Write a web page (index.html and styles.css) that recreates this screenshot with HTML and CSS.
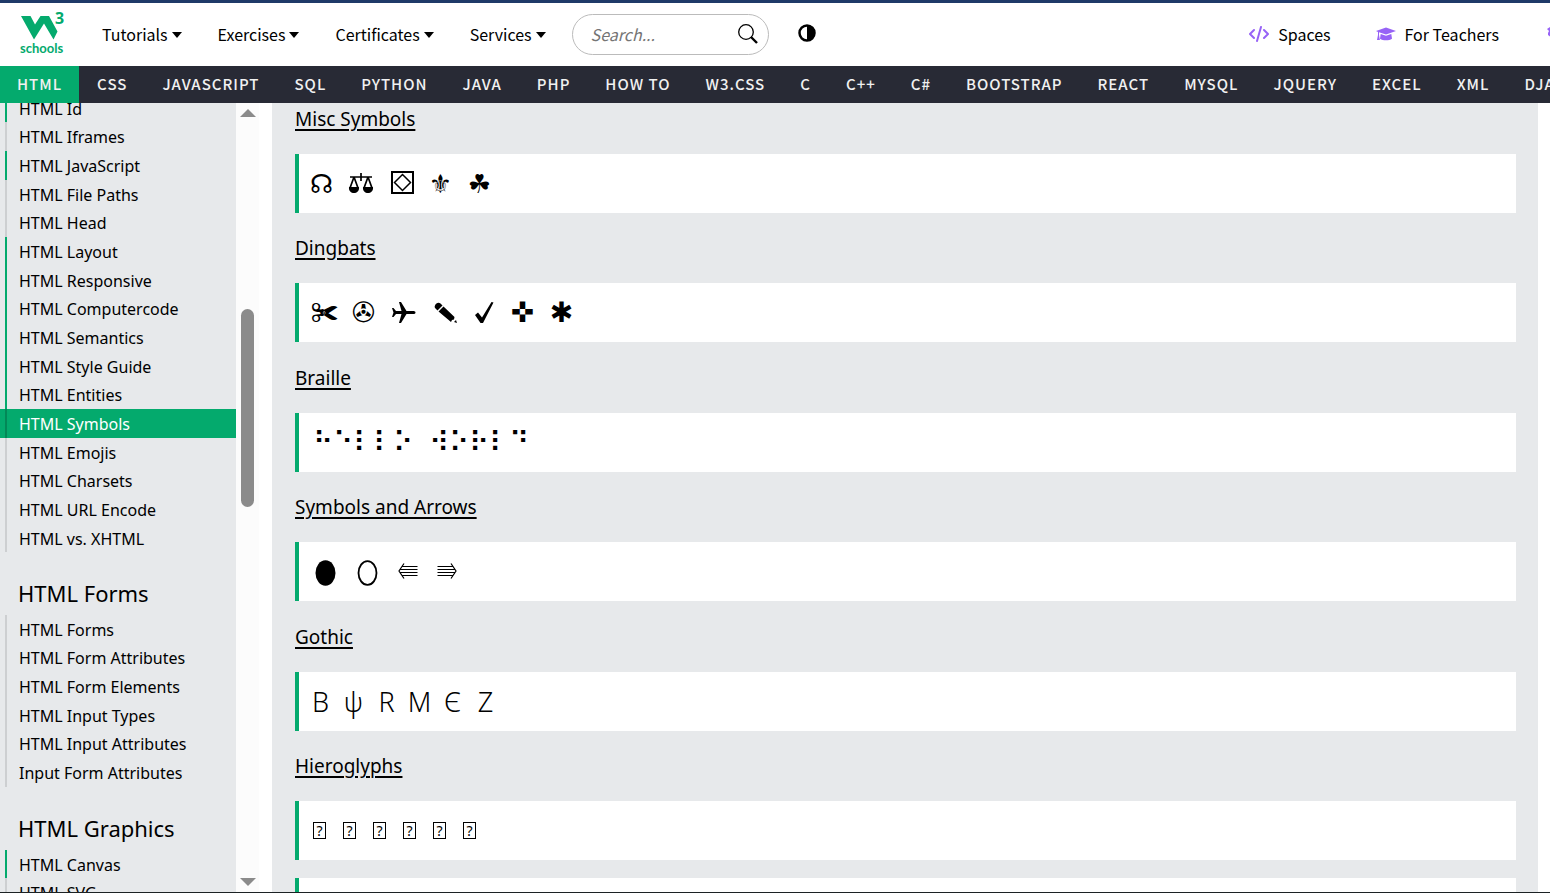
FILE: index.html
```html
<!DOCTYPE html>
<html lang="en">
<head>
<meta charset="utf-8">
<title>HTML Symbols</title>
<link rel="stylesheet" href="styles.css">
</head>
<body>
<header class="top">
  <a class="logo" href="#" aria-label="W3Schools home">
    <svg width="48" height="48" viewBox="0 0 48 48" fill="#04aa6d">
      <path d="M1 5H10.500L15 13.500 20.500 5H29L37.500 20.500 33.500 28.500 24 12.500 14 28.500Z"/>
      <text class="logo-3" x="35" y="13">3</text>
      <text class="logo-word" x="0" y="42">schools</text>
    </svg>
  </a>
  <nav class="menus" aria-label="Sections">
    <button class="menu">Tutorials<span class="caret"></span></button>
    <button class="menu">Exercises<span class="caret"></span></button>
    <button class="menu">Certificates<span class="caret"></span></button>
    <button class="menu">Services<span class="caret"></span></button>
  </nav>
  <form class="search">
    <input type="text" placeholder="Search..." aria-label="Search">
    <button type="button" class="search-btn" aria-label="Run search">
      <svg width="20" height="20" viewBox="0 0 20 20" fill="none" stroke="#000"><circle cx="8" cy="8" r="7.300" stroke-width="1.300"/><path d="M13 13l6 6" stroke-width="2.400"/></svg>
    </button>
  </form>
  <button class="theme" aria-label="Toggle theme">
    <svg width="18" height="18" viewBox="0 0 18 18"><circle cx="9" cy="9" r="7.500" fill="#fff" stroke="#000" stroke-width="2.500"/><path d="M9 1a8 8 0 0 1 0 16z"/></svg>
  </button>
  <div class="side-links">
    <a class="side-link" href="#">
      <svg width="20" height="16" viewBox="0 0 20 16" fill="none" stroke="#9763f6" stroke-width="2" stroke-linecap="round" stroke-linejoin="round"><path d="M5 4L1 8l4 4M15 4l4 4-4 4M12 1L8 15"/></svg>
      Spaces</a>
    <a class="side-link" href="#">
      <svg width="20" height="16" viewBox="0 0 20 16" fill="#9763f6"><path d="M10 1.500L20 5 10 8.500 3 6.300V9l.9 5H1l1-5V5.900L0 5zM4.700 8L10 9.800 15.300 8l.7 4.700c-3 2-9 2-12 0z"/></svg>
      For Teachers</a>
    <a class="side-link cut" href="#" aria-label="Get certified"><svg width="18" height="20" viewBox="0 0 18 20" fill="#9763f6"><path d="M0 5l3-2 2-3 4 1 4-1 2 3 3 2-2 5-4 4H5L1 11v-2l1-2z"/></svg></a>
  </div>
</header>
<nav class="topics" aria-label="Topics">
  <a class="topic on" href="#">HTML</a><a class="topic" href="#">CSS</a><a class="topic" href="#">JAVASCRIPT</a><a class="topic" href="#">SQL</a><a class="topic" href="#">PYTHON</a><a class="topic" href="#">JAVA</a><a class="topic" href="#">PHP</a><a class="topic" href="#">HOW TO</a><a class="topic" href="#">W3.CSS</a><a class="topic" href="#">C</a><a class="topic" href="#">C++</a><a class="topic" href="#">C#</a><a class="topic" href="#">BOOTSTRAP</a><a class="topic" href="#">REACT</a><a class="topic" href="#">MYSQL</a><a class="topic" href="#">JQUERY</a><a class="topic" href="#">EXCEL</a><a class="topic" href="#">XML</a><a class="topic" href="#">DJANGO</a>
</nav>
<div class="body">
  <nav class="sidebar" aria-label="HTML chapters">
    <ul class="chapters first">
      <li><a class="done" href="#">HTML Id</a></li>
      <li><a href="#">HTML Iframes</a></li>
      <li><a class="done" href="#">HTML JavaScript</a></li>
      <li><a href="#">HTML File Paths</a></li>
      <li><a href="#">HTML Head</a></li>
      <li><a class="done" href="#">HTML Layout</a></li>
      <li><a class="done" href="#">HTML Responsive</a></li>
      <li><a class="done" href="#">HTML Computercode</a></li>
      <li><a class="done" href="#">HTML Semantics</a></li>
      <li><a class="done" href="#">HTML Style Guide</a></li>
      <li><a class="done" href="#">HTML Entities</a></li>
      <li><a class="current" href="#">HTML Symbols</a></li>
      <li><a href="#">HTML Emojis</a></li>
      <li><a href="#">HTML Charsets</a></li>
      <li><a href="#">HTML URL Encode</a></li>
      <li><a href="#">HTML vs. XHTML</a></li>
    </ul>
    <h2>HTML Forms</h2>
    <ul class="chapters">
      <li><a href="#">HTML Forms</a></li>
      <li><a href="#">HTML Form Attributes</a></li>
      <li><a href="#">HTML Form Elements</a></li>
      <li><a href="#">HTML Input Types</a></li>
      <li><a href="#">HTML Input Attributes</a></li>
      <li><a href="#">Input Form Attributes</a></li>
    </ul>
    <h2>HTML Graphics</h2>
    <ul class="chapters">
      <li><a class="done" href="#">HTML Canvas</a></li>
      <li><a href="#">HTML SVG</a></li>
    </ul>
  </nav>
  <div class="scroll">
    <span class="up"></span>
    <span class="thumb"></span>
    <span class="down"></span>
  </div>
  <main class="content">
    <section>
      <h3><a href="#">Misc Symbols</a></h3>
      <div class="box row wide misc">
        <span>☊</span>
        <svg viewBox="0 0 40 30" role="img" aria-label="Scales"><path d="M9 8h22M20 4v8M13 8L9 19M13 8l4 11M27 8l-4 11M27 8l4 11" fill="none" stroke="#000" stroke-width="1.700"/><path d="M8 18h10c1 8-11 8-10 0zM22 18h10c1 8-11 8-10 0z"/></svg>
        <svg viewBox="0 0 40 30" role="img" aria-label="White diamond in square" fill="none" stroke="#000"><path d="M11 3h21v21H11z" stroke-width="2"/><path d="M21.500 5.500l8 8-8 8-8-8z" stroke-width="1.500"/></svg>
        <span>⚜</span>
        <span>☘</span>
      </div>
    </section>
    <section>
      <h3><a href="#">Dingbats</a></h3>
      <div class="box row wide">
        <span>✀</span>
        <span>✇</span>
        <svg viewBox="0 0 40 30" role="img" aria-label="Airplane"><path d="M32.500 14.500c0 1-1 1.500-2.500 1.500h-6.500L18 25h-2l2.500-9H13l-2.500 3H9l1.500-4.500L9 10h1.500l2.500 3h5.500L16 4h2l5.500 9H30c1.500 0 2.500.5 2.500 1.500z"/></svg>
        <svg viewBox="0 0 40 30" role="img" aria-label="Pencil"><path d="M12 7.500c1-2.500 3.500-3.500 5.500-2l2 2-5 5-2-2C11.500 9.500 11.500 8.500 12 7.500zM15.500 13.500l5-5L31.500 19l-.5 2.500-2 .5-1 2zM33 22l1 3-3-1z"/></svg>
        <svg viewBox="0 0 40 30" role="img" aria-label="Check mark"><path d="M12 17l3-2.500 4 5L28.500 4l2 .5L20 25h-2.500z"/></svg>
        <span>✜</span>
        <span>✱</span>
      </div>
    </section>
    <section>
      <h3><a href="#">Braille</a></h3>
      <div class="box row braille"><span>⠓</span><span>⠑</span><span>⠇</span><span>⠇</span><span>⠕</span><span class="space"></span><span>⠺</span><span>⠕</span><span>⠗</span><span>⠇</span><span>⠙</span></div>
    </section>
    <section>
      <h3><a href="#">Symbols and Arrows</a></h3>
      <div class="box row wide">
        <svg viewBox="0 0 40 30"><ellipse cx="20.500" cy="16" rx="10" ry="12.700"/></svg>
        <svg viewBox="0 0 40 30"><ellipse cx="22.500" cy="16" rx="9" ry="11.900" fill="none" stroke="#000" stroke-width="1.800"/></svg>
        <svg viewBox="0 0 40 30"><path d="M32.500 9.500H17M32.500 12.500H15M32.500 15.500H15M32.500 18.500H17M19 6.500L14 14l5 7.500" fill="none" stroke="#000" stroke-width="1.200"/></svg>
        <svg viewBox="0 0 40 30"><path d="M12.500 9.500H28M12.500 12.500H30M12.500 15.500H30M12.500 18.500H28M26 6.500l5 7.500-5 7.500" fill="none" stroke="#000" stroke-width="1.200"/></svg>
      </div>
    </section>
    <section>
      <h3><a href="#">Gothic</a></h3>
      <div class="box row gothic"><span>B</span><span>ψ</span><span>R</span><span>M</span><span>Є</span><span>Z</span></div>
    </section>
    <section>
      <h3><a href="#">Hieroglyphs</a></h3>
      <div class="box row missing"><span>?</span><span>?</span><span>?</span><span>?</span><span>?</span><span>?</span></div>
    </section>
    <div class="box"></div>
  </main>
</div>
</body>
</html>
```
FILE: styles.css
```css
* { box-sizing: border-box; }
body {
  margin: 0;
  height: 100vh;
  overflow: hidden;
  display: flex;
  flex-direction: column;
  border-bottom: 1px solid #1c2224;
  background: #fff;
  color: #000;
  font-family: "Noto Sans", "Open Sans", sans-serif;
  font-size: 16px;
}
a { color: inherit; text-decoration: none; }
button { border: 0; padding: 0; background: none; color: inherit; font: inherit; }
svg { display: block; flex: none; }

.top {
  flex: none;
  display: flex;
  align-items: center;
  height: 66px;
  border-top: 3px solid #1f3a68;
  padding-left: 20px;
  font-family: "Noto Sans CJK SC", sans-serif;
  white-space: nowrap;
  overflow: hidden;
}
.logo { margin-right: 34px; }
.logo svg { overflow: visible; }
.logo-3 { font: 700 16px "Open Sans", sans-serif; }
.logo-word { font: 700 13px Lato, sans-serif; }
.menus { display: flex; gap: 36px; padding-bottom: 2px; }
.menu { display: flex; align-items: center; gap: 4px; }
.caret { margin-top: 3px; border: 5px solid transparent; border-top: 6px solid #000; border-bottom: 0; }
.search {
  display: flex;
  align-items: center;
  width: 197px;
  height: 41px;
  margin-left: 26px;
  padding: 0 10px 2px 18px;
  border: 1px solid #bbb;
  border-radius: 21px;
}
.search input {
  flex: 1;
  min-width: 0;
  border: 0;
  padding: 0;
  outline: 0;
  background: none;
  font: 16px "Noto Sans CJK SC", sans-serif;
}
.search input::placeholder { color: #757575; font-style: italic; }
.theme { margin-left: 29px; padding-bottom: 3px; }
.side-links { display: flex; margin-left: auto; padding-bottom: 2px; }
.side-link { display: flex; align-items: center; gap: 9px; margin-right: 45px; }
.side-link.cut { width: 3px; margin: 0 0 0 3px; overflow: hidden; }

.topics {
  flex: none;
  display: flex;
  height: 37px;
  overflow: hidden;
  background: #282a35;
  color: #f1f1f1;
  font: 500 15px/35px "Noto Sans CJK SC", sans-serif;
  letter-spacing: 1px;
  white-space: nowrap;
}
.topic { padding: 0 17px 0 18px; }
.topic.on { padding: 0 17px; background: #04aa6d; }

.body { flex: 1; min-height: 0; display: flex; }
.sidebar { flex: none; width: 236px; overflow: hidden; background: #e7e9eb; }
.chapters { margin: 0; padding: 0; list-style: none; }
.chapters.first { margin-top: -9px; }
.chapters a {
  display: flex;
  gap: 12px;
  height: 29px;
  padding-left: 5px;
  line-height: 31px;
}
.chapters li:nth-child(3n+1) a { height: 28px; }
.chapters a::before { content: ""; width: 2px; background: #cdcfd1; }
.chapters .done::before { background: #04aa6d; }
.chapters .current { background: #04aa6d; color: #fff; }
.chapters .current::before { background: #038857; }
.sidebar h2 {
  margin: 0;
  padding: 21px 0 2px 18px;
  font-size: 22px;
  font-weight: 400;
  line-height: 40px;
}

.scroll {
  flex: none;
  display: flex;
  flex-direction: column;
  align-items: center;
  width: 23px;
  margin-right: 13px;
  padding: 6px 0;
  background: #fcfcfc;
}
.up, .down { border: 8px solid transparent; }
.up { border-top: 0; border-bottom-color: #8b8b8b; }
.down { border-bottom: 0; border-top-color: #8b8b8b; margin-top: auto; }
.thumb { width: 13px; height: 198px; margin-top: 192px; border-radius: 7px; background: #8b8b8b; }

.content {
  flex: 1;
  min-width: 0;
  margin-right: 12px;
  padding: 0 22px 0 23px;
  overflow: hidden;
  background: #e7e9eb;
}
.content h3 {
  margin: 0;
  padding: 19px 0;
  font-size: 19px;
  font-weight: 400;
  line-height: 32px;
}
.content section:first-child h3 { padding-top: 0; }
.content section:nth-child(even) { margin-bottom: 1px; }
.content section:last-of-type { margin-bottom: 18px; }
.content h3 a { text-decoration: underline 2px; text-underline-offset: 3px; }
.box {
  height: 59px;
  border-left: 4px solid #04aa6d;
  background: #fff;
}
.row {
  display: flex;
  align-items: center;
  font: 28px/40px "DejaVu Sans", sans-serif;
}
.row span { text-align: center; }
.wide { padding-left: 6px; }
.wide span { width: 39px; }
.wide svg { width: 40px; height: 30px; }
.row.misc { padding-left: 3px; font-size: 26px; }
.braille { padding-left: 14px; }
.braille span { width: 20px; }
.braille .space { width: 16px; }
.gothic { padding-left: 5px; font: 300 27px/40px "Noto Sans", sans-serif; }
.gothic span { width: 33px; }
.missing { gap: 17px; padding-left: 14px; }
.missing span { width: 13px; border: 1px solid #000; font: 14px/15px "Noto Sans", sans-serif; }
```
